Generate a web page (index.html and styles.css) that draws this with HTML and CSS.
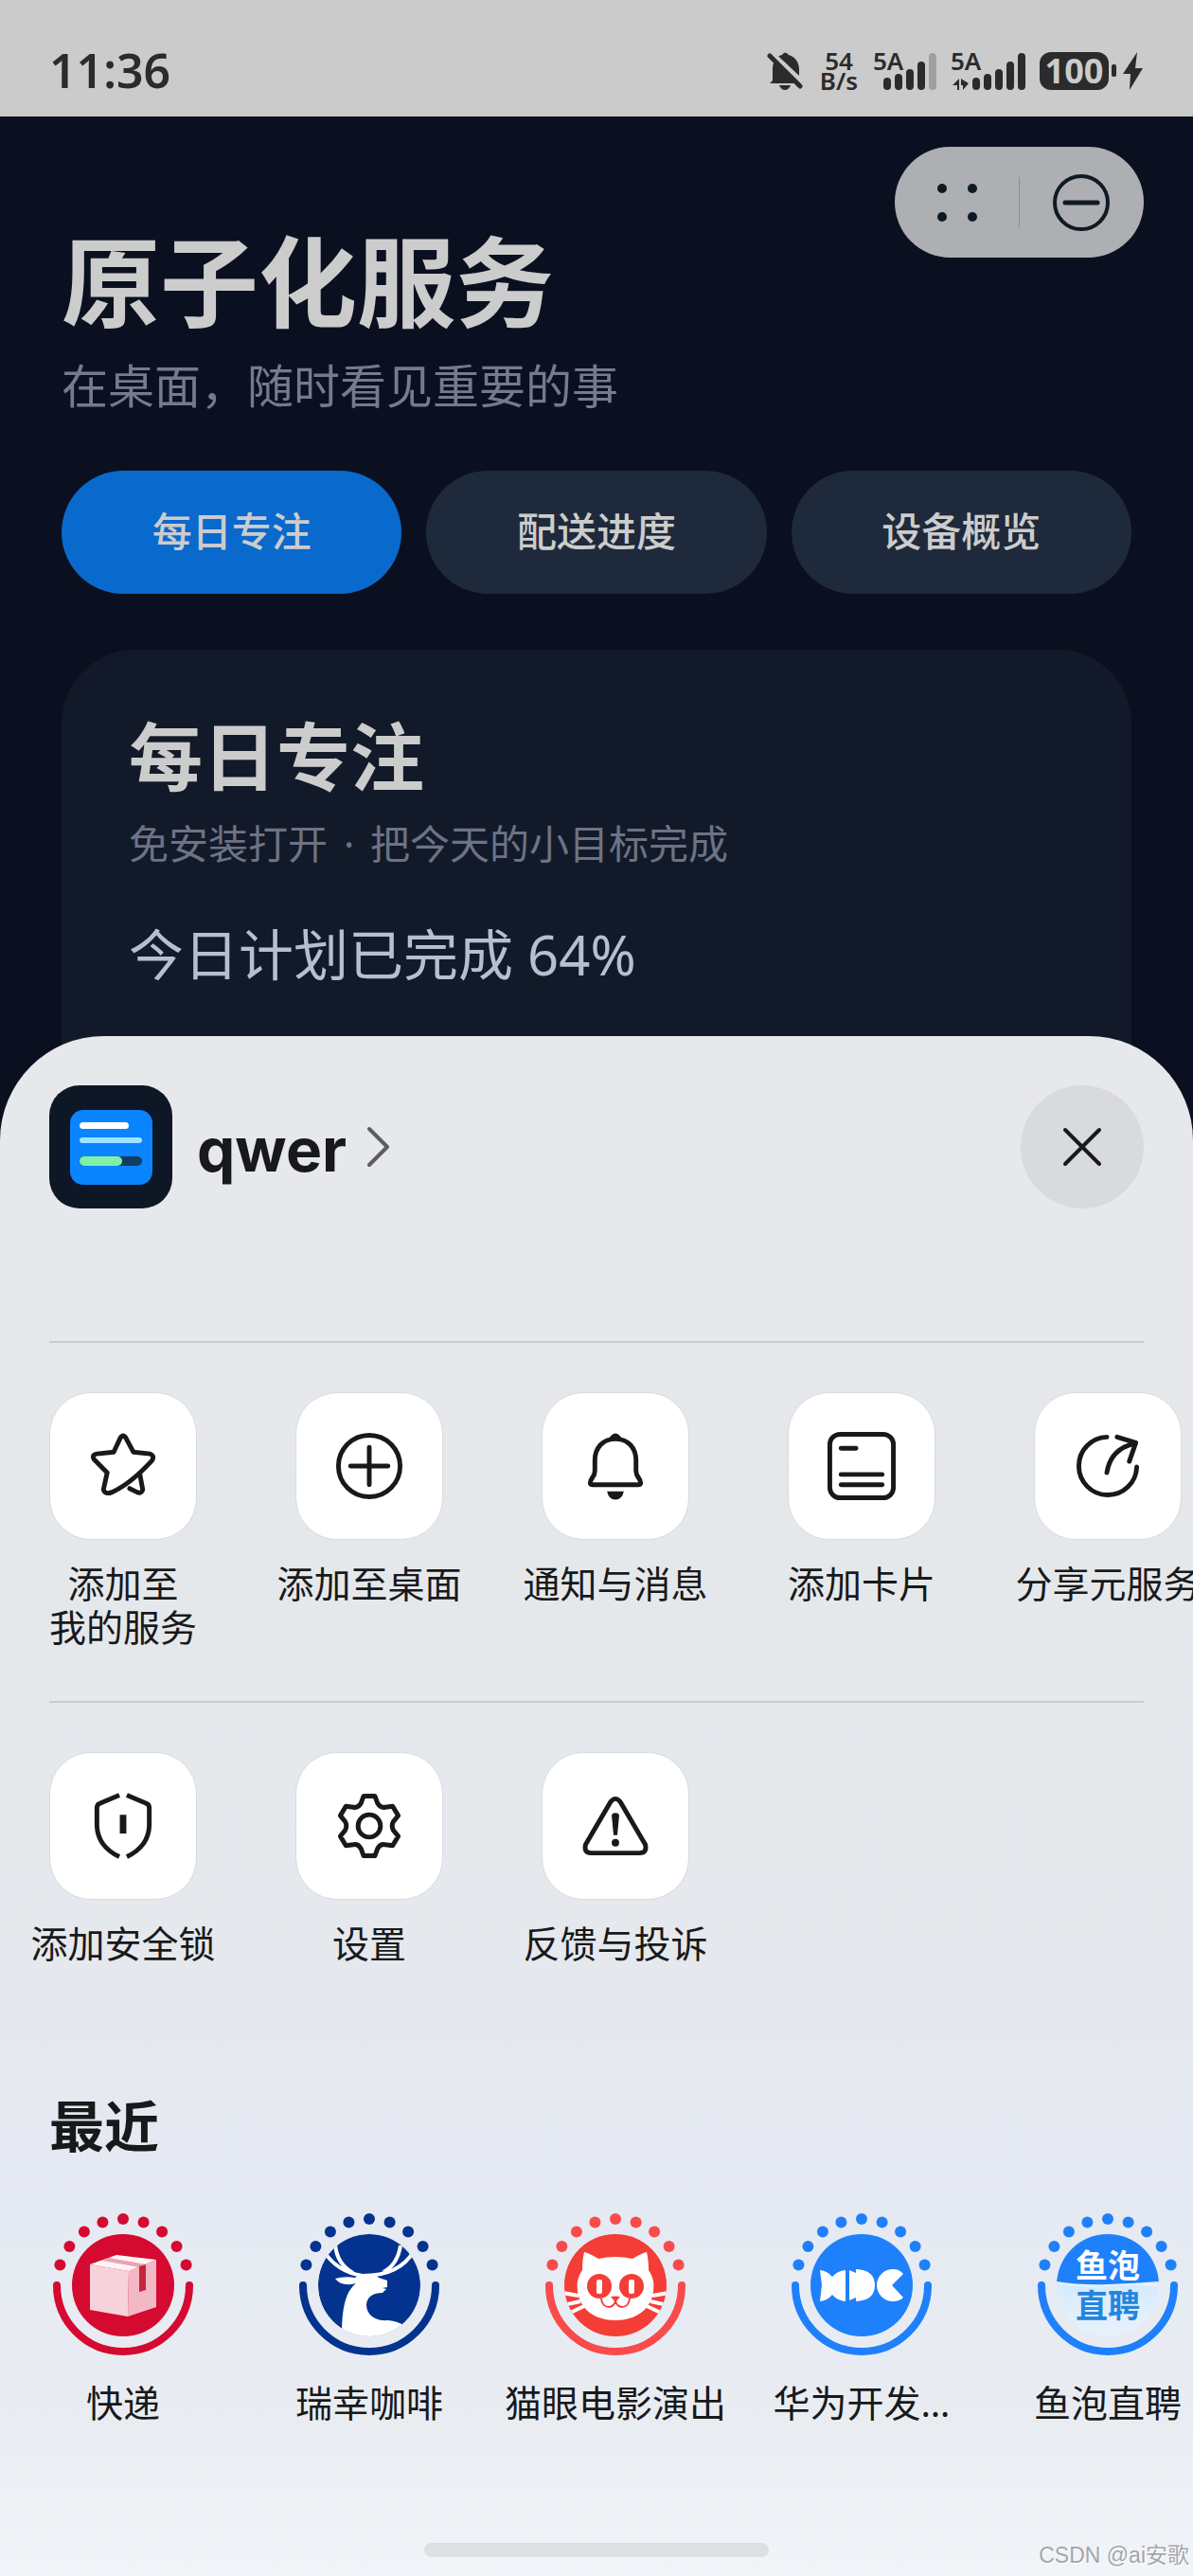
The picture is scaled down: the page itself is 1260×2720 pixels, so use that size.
FILE: index.html
```html
<!doctype html>
<html lang="zh-CN">

<head>
    <meta charset="utf-8">
    <meta name="viewport" content="width=device-width, initial-scale=1">
    <title>原子化服务</title>
    <link rel="stylesheet" href="styles.css">
</head>

<body>

    <!-- shared ring: nine dots on top, round arc below -->
    <svg class="sprite" aria-hidden="true">
        <symbol id="ring" viewBox="-78 -78 156 156">
            <path d="M-70 0A70 70 0 0 0 70 0" fill="none" stroke="currentColor" stroke-width="8" stroke-linecap="round" />
            <g fill="currentColor">
                <circle cx="-66.6" cy="-21.6" r="6" />
                <circle cx="-56.6" cy="-41.1" r="6" />
                <circle cx="-41.1" cy="-56.6" r="6" />
                <circle cx="-21.6" cy="-66.6" r="6" />
                <circle cx="0" cy="-70" r="6" />
                <circle cx="21.6" cy="-66.6" r="6" />
                <circle cx="41.1" cy="-56.6" r="6" />
                <circle cx="56.6" cy="-41.1" r="6" />
                <circle cx="66.6" cy="-21.6" r="6" />
            </g>
        </symbol>
        <clipPath id="disc">
            <circle r="54" />
        </clipPath>
        <linearGradient id="water" x1="0" y1="0" x2="0" y2="1">
            <stop offset="0" stop-color="#d3eaff" />
            <stop offset="1" stop-color="#e8f1fb" stop-opacity="0.2" />
        </linearGradient>
    </svg>

    <div class="status-bar">
        <time class="clock">11:36</time>
        <div class="status-icons">
            <svg width="40" height="42" viewBox="0 0 40 42" aria-label="静音">
                <path d="M6 31V19C6 10 11 5 16 4Q19 -1 23 4C30 6 34 12 34 19V31L37 34H3Z" fill="#2b2b2b" />
                <path d="M13 36H25Q23 41 19 41T13 36Z" fill="#2b2b2b" />
                <path d="M5 2L39 34" stroke="#cbcbcb" stroke-width="5" />
                <path d="M3 5L35 37" stroke="#2b2b2b" stroke-width="5" stroke-linecap="round" />
            </svg>
            <div class="net-speed"><span>54</span><span>B/s</span></div>
            <svg class="signal" width="68" height="42" viewBox="0 0 68 42">
                <text x="0" y="20">5A</text>
                <g stroke="#2b2b2b" stroke-width="8" stroke-linecap="round">
                    <path d="M15 32V37M27 28V37M39 23V37M51 15V37" />
                    <path d="M63 6V37" stroke="#9f9f9f" />
                </g>
            </svg>
            <svg class="signal" width="80" height="42" viewBox="0 0 80 42">
                <text x="0" y="20">5A</text>
                <path d="M2 36L9 29V41H7V36ZM11 29L19 34L13 41V36H11Z" fill="#2b2b2b" />
                <g stroke="#2b2b2b" stroke-width="8" stroke-linecap="round">
                    <path d="M27 32V37M39 28V37M51 23V37M63 15V37M75 6V37" />
                </g>
            </svg>
            <div class="battery">
                <span class="battery-level">100</span>
                <span class="battery-cap"></span>
                <svg width="22" height="40" viewBox="0 0 22 40" aria-hidden="true">
                    <path d="M15 0L0 23H8L7 40L21 17H13Z" fill="#2b2b2b" />
                </svg>
            </div>
        </div>
    </div>

    <main class="app">
        <div class="capsule">
            <button type="button" aria-label="更多">
                <svg width="44" height="44" viewBox="-22 -22 44 44" fill="#0f1a24">
                    <circle cx="-16" cy="-15" r="5" />
                    <circle cx="16" cy="-15" r="5" />
                    <circle cx="-16" cy="15" r="5" />
                    <circle cx="16" cy="15" r="5" />
                </svg>
            </button>
            <button type="button" aria-label="关闭">
                <svg width="62" height="62" viewBox="-31 -31 62 62" fill="none" stroke="#0f1a24" stroke-linecap="round">
                    <circle r="28" stroke-width="4" />
                    <path d="M-17 0H17" stroke-width="5" />
                </svg>
            </button>
        </div>

        <h1>原子化服务</h1>
        <p class="subtitle">在桌面，随时看见重要的事</p>

        <div class="tabs">
            <button type="button" class="tab active">每日专注</button>
            <button type="button" class="tab">配送进度</button>
            <button type="button" class="tab">设备概览</button>
        </div>

        <section class="card">
            <h2>每日专注</h2>
            <p class="card-note">免安装打开 <span class="dot">·</span> 把今天的小目标完成</p>
            <p class="card-progress">今日计划已完成 64%</p>
        </section>
    </main>

    <section class="sheet">
        <header class="sheet-header">
            <a href="#" class="app-link">
                <svg width="130" height="130" viewBox="0 0 130 130" aria-hidden="true">
                    <rect width="130" height="130" rx="32" fill="#0e1726" />
                    <rect x="22" y="26" width="87" height="79" rx="14" fill="#0a84ff" />
                    <rect x="32" y="39" width="52" height="7" rx="3.5" fill="#fff" />
                    <rect x="32" y="55" width="66" height="6" rx="3" fill="#9be4ff" />
                    <rect x="32" y="75" width="66" height="10" rx="5" fill="#143c63" />
                    <rect x="32" y="75" width="45" height="10" rx="5" fill="#7ff0a6" />
                </svg>
                <span class="app-name">qwer</span>
                <svg width="24" height="44" viewBox="0 0 24 44" aria-hidden="true">
                    <path d="M2 3L21 22L2 41" fill="none" stroke="#5b5d60" stroke-width="4" stroke-linecap="round" stroke-linejoin="round" />
                </svg>
            </a>
            <button type="button" class="close" aria-label="关闭">
                <svg width="44" height="44" viewBox="-22 -22 44 44">
                    <path d="M-18 -18L18 18M18 -18L-18 18" stroke="#18191b" stroke-width="4" stroke-linecap="round" />
                </svg>
            </button>
        </header>

        <div class="actions">
            <button type="button" class="item">
                <svg class="tile" viewBox="-78 -78 156 156">
                    <path d="M-12 28Q-19 31 -21 25L-17 7L-31 -7Q-34 -12 -28 -13L-10 -15L-3 -30Q0 -35 3 -30L11 -15L29 -13Q34 -11 31 -6Q8 19 -12 28Z" />
                    <path d="M18 9L21 25Q20 30 15 28L7 24" />
                </svg>
                <span>添加至<br>我的服务</span>
            </button>
            <button type="button" class="item">
                <svg class="tile" viewBox="-78 -78 156 156">
                    <circle r="33" />
                    <path d="M-20 0H20M0 -20V20" />
                </svg>
                <span>添加至桌面</span>
            </button>
            <button type="button" class="item">
                <svg class="tile" viewBox="-78 -78 156 156">
                    <path d="M-22 -6C-22 -20 -13 -29 0 -29S22 -20 22 -6V5C22 12 27 13 27 18Q27 20 24 20H-24Q-27 20 -27 18C-27 13 -22 12 -22 5Z" />
                    <path class="solid" d="M-8 -28Q-4 -35 0 -35T8 -28ZM-9 27H9Q7 36 0 36T-9 27Z" />
                </svg>
                <span>通知与消息</span>
            </button>
            <button type="button" class="item">
                <svg class="tile" viewBox="-78 -78 156 156">
                    <rect x="-34" y="-34" width="68" height="68" rx="11" />
                    <path d="M-22 -19H-6M-22 9H22M-22 20H22" />
                </svg>
                <span>添加卡片</span>
            </button>
            <button type="button" class="item">
                <svg class="tile" viewBox="-78 -78 156 156">
                    <path d="M-1 -31A31 31 0 1 0 31 1M-1 7Q3 -18 28 -24M10 -31L30 -25L23 -5" />
                </svg>
                <span>分享元服务</span>
            </button>
        </div>

        <div class="actions">
            <button type="button" class="item">
                <svg class="tile" viewBox="-78 -78 156 156">
                    <path class="flat" d="M-4 -33L-25 -24Q-28 -23 -28 -19V0Q-27 22 -4 33M4 -33L25 -24Q28 -23 28 -19V0Q27 22 4 33" />
                    <path class="flat" d="M0 -12V8" stroke-width="7" />
                </svg>
                <span>添加安全锁</span>
            </button>
            <button type="button" class="item">
                <svg class="tile" viewBox="-78 -78 156 156">
                    <path d="M-6 -32L6 -32L9 -24Q12 -19 17 -20L25 -21L31 -11L26 -5Q23 0 26 5L31 11L25 21L17 20Q12 19 9 24L6 32L-6 32L-9 24Q-12 19 -17 20L-25 21L-31 11L-26 5Q-23 0 -26 -5L-31 -11L-25 -21L-17 -20Q-12 -19 -9 -24Z" />
                    <circle r="12" />
                </svg>
                <span>设置</span>
            </button>
            <button type="button" class="item">
                <svg class="tile" viewBox="-78 -78 156 156">
                    <path d="M-5 -26Q0 -32 5 -26L32 20Q34 29 26 29H-26Q-34 29 -32 20Z" />
                    <path class="solid" d="M-4 -11Q-4 -14 0 -14T4 -11L2 10H-2Z" />
                    <circle class="solid" cy="18" r="4" />
                </svg>
                <span>反馈与投诉</span>
            </button>
        </div>

        <h2 class="recent-title">最近</h2>
        <div class="recent">
            <a href="#" class="item">
                <svg class="logo express" viewBox="-78 -78 156 156">
                    <use href="#ring" x="-78" y="-78" width="156" height="156" />
                    <circle r="54" fill="currentColor" />
                    <path d="M-35 -22L6 -15L5 33L-35 26Z" fill="#f8d2da" />
                    <path d="M6 -15L35 -27V23L5 33Z" fill="#f2b9c5" />
                    <path d="M-35 -22L-7 -32L35 -27L6 -15Z" fill="#fff5f6" />
                    <path d="M-22 -26L-15 -29L24 -22L17 -19Z" fill="#eba3b1" />
                    <path d="M17 -20L24 -22V5L17 7Z" fill="#c9243f" />
                </svg>
                <span>快递</span>
            </a>
            <a href="#" class="item">
                <svg class="logo luckin" viewBox="-78 -78 156 156">
                    <use href="#ring" x="-78" y="-78" width="156" height="156" />
                    <g clip-path="url(#disc)">
                        <circle r="54" fill="currentColor" />
                        <path d="M-36 -43Q-34 -22 -17 -13M-48 -36Q-34 -14 -7 -10Q32 -10 47 -36M33 -42Q30 -22 15 -14" fill="none" stroke="#fff" stroke-width="4" />
                        <path d="M-36 -7Q-26 -10 -15 -8L-9 -12H5L10 -8L19 -5V2L14 3L18 4L14 8C4 8 -2 12 -3 20C-3 34 10 38 20 37Q30 38 38 43L20 56H-29C-29 30 -27 8 -14 -2Q-29 2 -36 -7Z" fill="#fff" />
                    </g>
                </svg>
                <span>瑞幸咖啡</span>
            </a>
            <a href="#" class="item">
                <svg class="logo maoyan" viewBox="-78 -78 156 156">
                    <use href="#ring" x="-78" y="-78" width="156" height="156" />
                    <circle r="54" fill="#f53d37" />
                    <path d="M-33 -35Q-28 -34 -18 -28Q0 -32 18 -28Q28 -34 33 -35Q35 -27 35 -16Q42 -6 40 6C38 25 22 37 0 37S-38 25 -40 6Q-42 -6 -35 -16Q-35 -27 -33 -35Z" fill="#fff" />
                    <path clip-path="url(#disc)" d="M-56 8L-39 11M-55 21L-37 17M-50 30L-33 22M56 8L39 11M55 21L37 17M50 30L33 22" stroke="#fff" stroke-width="4" />
                    <g fill="#f53d37">
                        <circle cx="-17" cy="1" r="13" />
                        <circle cx="17" cy="1" r="13" />
                        <path d="M-5 12Q0 11 5 12L0 18Z" />
                    </g>
                    <path d="M-15 14C-14 26 -1 25 0 16C1 25 14 26 15 14" fill="none" stroke="#f53d37" stroke-width="2" />
                    <rect x="-20" y="-6" width="6" height="15" rx="2" fill="#fff" />
                    <rect x="14" y="-6" width="6" height="15" rx="2" fill="#fff" />
                </svg>
                <span>猫眼电影演出</span>
            </a>
            <a href="#" class="item">
                <svg class="logo hdc" viewBox="-78 -78 156 156">
                    <use href="#ring" x="-78" y="-78" width="156" height="156" />
                    <circle r="54" fill="currentColor" />
                    <g fill="#fff">
                        <path d="M-44 -16Q-36 -15 -31 -9Q-26 -15 -17 -16V17Q-26 16 -31 10Q-36 16 -44 17L-42 0Z" />
                        <path d="M-13 -16L-6 -13V-17Q14 -16 14 0T-6 17V13L-13 16Z" />
                        <path d="M33 -17Q40 -17 44 -12L32 0L44 13Q40 17 33 17A17 17 0 0 1 33 -17Z" />
                    </g>
                </svg>
                <span>华为开发…</span>
            </a>
            <a href="#" class="item">
                <svg class="logo yupao" viewBox="-78 -78 156 156">
                    <use href="#ring" x="-78" y="-78" width="156" height="156" />
                    <g clip-path="url(#disc)">
                        <rect x="-54" y="-54" width="108" height="54" fill="currentColor" />
                        <path d="M-54 -4Q-28 0 0 -1T54 -4V54H-54Z" fill="#e6f0fa" />
                        <path d="M-54 -1Q-28 3 0 1T54 2V54H-54Z" fill="url(#water)" />
                    </g>
                    <text y="-8" fill="#fff">鱼泡</text>
                    <text y="34" fill="#2386dc">直聘</text>
                </svg>
                <span>鱼泡直聘</span>
            </a>
        </div>

        <div class="home-bar"></div>
        <div class="watermark">CSDN @ai安歌</div>
    </section>

</body>

</html>
```
FILE: styles.css
```css
* {
    box-sizing: border-box;
}

body {
    display: flex;
    flex-direction: column;
    min-height: 100vh;
    margin: 0;
    overflow-x: hidden;
    background: #0b1020;
    color: #18191b;
    font-family: "Noto Sans", "Noto Sans CJK SC", sans-serif;
}

h1,
h2,
p {
    margin: 0;
}

button {
    padding: 0;
    border: 0;
    background: none;
    color: inherit;
    font: inherit;
}

a {
    color: inherit;
    text-decoration: none;
}

svg {
    display: block;
    flex-shrink: 0;
}

.sprite {
    position: absolute;
    width: 0;
    height: 0;
}

/* status bar */

.status-bar {
    display: flex;
    align-items: center;
    justify-content: space-between;
    padding: 50px 52px 24px 52px;
    background: #cbcbcb;
    color: #2b2b2b;
    line-height: 49px;
}

.clock {
    font-size: 50px;
    font-weight: 600;
}

.status-icons {
    display: flex;
    align-items: center;
    gap: 14px;
}

.net-speed {
    display: flex;
    flex-direction: column;
    width: 44px;
    font-size: 26px;
    font-weight: 600;
    line-height: 21px;
    text-align: center;
}

.signal {
    overflow: visible;
}

.signal text {
    fill: #2b2b2b;
    font-size: 26px;
    font-weight: 600;
}

.battery {
    display: flex;
    align-items: center;
}

.battery-level {
    width: 73px;
    border-radius: 12px;
    background: #2b2b2b;
    color: #cbcbcb;
    font-size: 36px;
    font-weight: 700;
    line-height: 40px;
    text-align: center;
}

.battery-cap {
    width: 5px;
    height: 13px;
    margin: 0 7px 0 3px;
    border-radius: 2px;
    background: #2b2b2b;
}

/* app behind the sheet */

.app {
    position: relative;
    padding: 110px 65px 0;
    color: #cccccc;
}

.capsule {
    position: absolute;
    top: 32px;
    right: 52px;
    display: flex;
    width: 263px;
    height: 117px;
    border-radius: 59px;
    background: #adafb2;
}

.capsule button {
    display: flex;
    flex: 1;
    align-items: center;
    justify-content: center;
}

.capsule::before {
    content: "";
    position: absolute;
    top: 32px;
    left: 131px;
    width: 1px;
    height: 53px;
    background: #8b8d91;
}

.app h1 {
    font-size: 104px;
    line-height: 130px;
}

.subtitle {
    margin-top: 14px;
    color: #747b90;
    font-size: 49px;
    line-height: 60px;
}

.tabs {
    display: flex;
    gap: 26px;
    margin-top: 60px;
}

.tab {
    flex: 1;
    height: 130px;
    padding-bottom: 8px;
    border-radius: 65px;
    background: #1e2a3b;
    font-size: 42px;
    font-weight: 500;
}

.tab.active {
    background: #0a69cc;
}

.card {
    margin-top: 59px;
    padding: 64px 71px 154px;
    border-radius: 78px;
    background: #121a29;
}

.card h2 {
    font-size: 78px;
    line-height: 98px;
}

.card-note {
    margin-top: 17px;
    color: #6d7385;
    font-size: 42px;
    line-height: 52px;
}

.card-note .dot {
    margin: 0 6px;
}

.card-progress {
    margin-top: 55px;
    color: #b5bfd1;
    font-size: 58px;
    line-height: 72px;
}

/* bottom sheet */

.sheet {
    position: relative;
    display: flex;
    flex: 1;
    flex-direction: column;
    margin-top: -104px;
    padding: 52px 52px 20px;
    overflow: hidden;
    border-radius: 110px 110px 0 0;
    background: linear-gradient(#e7e8eb, #e5e8eb 35%, #e5e8ec 55%, #e5e9f2 75%, #e9edf2 90%, #f1f4f8);
}

.sheet-header {
    display: flex;
    align-items: center;
    justify-content: space-between;
    margin-bottom: 140px;
}

.app-link {
    display: flex;
    align-items: center;
}

.app-name {
    margin: 0 22px 0 26px;
    padding-top: 6px;
    font-family: Inter, "Noto Sans", sans-serif;
    font-size: 64px;
    font-weight: 700;
    line-height: 80px;
}

.close {
    display: flex;
    align-items: center;
    justify-content: center;
    width: 130px;
    height: 130px;
    border-radius: 50%;
    background: #d8dadd;
}

.actions {
    display: flex;
    gap: 104px;
    padding: 52px 0 55px;
    border-top: 2px solid #c9cccf;
}

.item {
    display: flex;
    flex: none;
    flex-direction: column;
    align-items: center;
    gap: 23px;
    width: 156px;
    font-size: 39px;
    line-height: 46px;
    text-align: center;
    white-space: nowrap;
}

.tile {
    width: 156px;
    height: 156px;
    border: 1px solid #d9dbde;
    border-radius: 44px;
    background: #fff;
    fill: none;
    stroke: #18191b;
    stroke-width: 5;
    stroke-linecap: round;
    stroke-linejoin: round;
}

.tile .solid {
    fill: #18191b;
    stroke: none;
}

.tile .flat {
    stroke-linecap: butt;
}

.recent-title {
    margin-top: 80px;
    font-size: 58px;
    line-height: 70px;
}

.recent {
    display: flex;
    gap: 104px;
    margin: 55px 0 40px;
}

.logo {
    width: 156px;
    height: 156px;
}

.logo text {
    font-size: 34px;
    font-weight: 700;
    text-anchor: middle;
}

.express {
    color: #d40a30;
}

.luckin {
    color: #04338f;
}

.maoyan {
    color: #f94a4c;
}

.hdc,
.yupao {
    color: #1f80fb;
}

.home-bar {
    align-self: center;
    width: 364px;
    height: 15px;
    margin-top: auto;
    border-radius: 8px;
    background: #dde0e1;
}

.watermark {
    position: absolute;
    right: 4px;
    bottom: 8px;
    color: #a3a6aa;
    font-family: "Liberation Sans", "Noto Sans CJK SC", sans-serif;
    font-size: 23px;
    line-height: 28px;
    text-shadow: 1px 1px 0 #fff;
}
```
